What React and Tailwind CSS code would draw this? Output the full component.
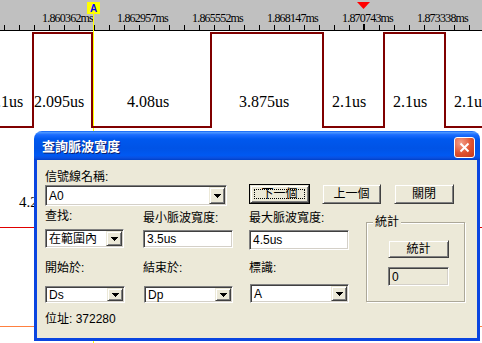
import React from 'react';

// classic win32 3d edges
const SUNKEN = 'border border-[#808080] border-r-white border-b-white shadow-[inset_1px_1px_0_#404040,inset_-1px_-1px_0_#d4d0c8]';
const RAISED = 'border border-[#ece9d8] border-r-[#404040] border-b-[#404040] shadow-[inset_1px_1px_0_#fff,inset_-1px_-1px_0_#808080]';

const ticks = Array.from({ length: 32 }, (_, i) => 4 + i * 15);
const rulerLabels = ['1.860362ms', '1.862957ms', '1.865552ms', '1.868147ms', '1.870743ms', '1.873338ms'];
const pulses = [
    { x: -11, t: '2.1us' },
    { x: 34, t: '2.095us' },
    { x: 127, t: '4.08us' },
    { x: 239, t: '3.875us' },
    { x: 332, t: '2.1us' },
    { x: 393, t: '2.1us' },
    { x: 454, t: '2.1us' },
];

function WaveView() {
    return (
        <svg width="482" height="343" className="block" shapeRendering="crispEdges">
            {/* ruler */}
            <rect x="0" y="0" width="482" height="30" fill="#c0c0c0" />
            <rect x="0" y="30" width="482" height="1" fill="#000" />
            {ticks.map(x => (
                <rect key={x} x={x} y="25" width="1" height="5" fill="#000" />
            ))}
            <rect x="363" y="24" width="2" height="6" fill="#000" />
            {rulerLabels.map((t, i) => (
                <text key={t} x={93 + i * 75} y="22" textAnchor="end" fontFamily="'Liberation Serif', serif" fontSize="12" letterSpacing="-0.8" fill="#000" shapeRendering="auto">
                    {t}
                </text>
            ))}
            {/* cursor A */}
            <rect x="93" y="13" width="1" height="330" fill="#ffff00" />
            <rect x="87" y="2" width="13" height="12" fill="#ffff00" />
            <text x="93.5" y="12" textAnchor="middle" fontFamily="'Liberation Sans', sans-serif" fontSize="10" fontWeight="bold" fill="#0000ff">A</text>
            {/* current position */}
            <polygon points="357,2 370,2 363.5,9" fill="#ff0000" shapeRendering="auto" />

            {/* pulse train */}
            <polyline
                points="0,127 33,127 33,33 92,33 92,127 211,127 211,33 323,33 323,127 384,127 384,33 445,33 445,127 482,127"
                fill="none"
                stroke="#800000"
                strokeWidth="2"
            />
            {pulses.map(p => (
                <text key={p.x} x={p.x} y="107" fontFamily="'Liberation Serif', serif" fontSize="16" fill="#000" shapeRendering="auto">
                    {p.t}
                </text>
            ))}

            {/* next channel */}
            <text x="19" y="207" fontFamily="'Liberation Serif', serif" fontSize="15" fill="#000">4.2</text>
            <rect x="0" y="227" width="482" height="1" fill="#e00000" />
            <rect x="0" y="326" width="482" height="1" fill="#ff8040" />
        </svg>
    );
}

function Arrow() {
    return (
        <svg width="7" height="4" viewBox="0 0 7 4" shapeRendering="crispEdges">
            <path d="M0 0h7v1h-1v1h-1v1h-1v1h-1v-1h-1v-1h-1v-1h-1z" fill="#000" />
        </svg>
    );
}

function Combo({ value, className = '' }) {
    return (
        <div className={`flex bg-white p-[1px] ${SUNKEN} ${className}`}>
            <span className="flex-1 self-center pl-[2px] leading-[14px]">{value}</span>
            <span className={`w-[16px] flex items-center justify-center bg-[#ece9d8] ${RAISED}`}>
                <Arrow />
            </span>
        </div>
    );
}

function TextBox({ value, className = '', bg = 'bg-white' }) {
    return (
        <div className={`flex items-center pl-[3px] leading-[14px] ${SUNKEN} ${bg} ${className}`}>{value}</div>
    );
}

function Btn({ children, className = '', isDefault = false }) {
    if (isDefault) {
        return (
            <div className={`border border-black ${className}`}>
                <div className={`h-full flex items-center justify-center bg-[#ece9d8] outline-1 outline-dotted outline-black outline-offset-[-5px] ${RAISED}`}>
                    {children}
                </div>
            </div>
        );
    }
    return (
        <div className={`flex items-center justify-center bg-[#ece9d8] ${RAISED} ${className}`}>{children}</div>
    );
}

function CloseButton() {
    return (
        <div className="ml-auto mt-[6px] w-[21px] h-[21px] rounded-[3px] border border-white bg-[radial-gradient(circle_at_30%_25%,#f3a08a,#e0522f_55%,#c4391c)] flex items-center justify-center">
            <svg width="11" height="11" viewBox="0 0 11 11">
                <path d="M1.5 1.5l8 8M9.5 1.5l-8 8" stroke="#fff" strokeWidth="2" />
            </svg>
        </div>
    );
}

function PulseDialog() {
    return (
        <div className="absolute left-[34px] top-[131px] w-[446px] h-[210px] flex flex-col text-[12px] leading-[14px] text-black font-['Liberation_Sans','Noto_Sans_CJK_TC',sans-serif]">
            {/* title bar */}
            <div className="h-[29px] shrink-0 flex items-start pl-[8px] pr-[5px] rounded-t-[8px] bg-[linear-gradient(180deg,#0a5df5_0%,#4a95ff_5%,#1b6cff_13%,#0058ee_28%,#0053e6_60%,#0059f2_84%,#0a4fe0_93%,#0040c8_100%)]">
                <span className="mt-[8px] text-[13px] leading-[16px] font-bold text-white [text-shadow:1px_1px_0_#0a1e6e]">查詢脈波寬度</span>
                <CloseButton />
            </div>

            {/* client area */}
            <div className="flex-1 border-x-[3px] border-b-[3px] border-[#0a45e0] bg-[#ece9d8] pl-[8px] pt-[10px] grid grid-cols-[98px_106px_117px_98px] grid-rows-[14px_22px_23px_21px_34px_21px_auto] content-start">
                <div className="col-span-2">信號線名稱:</div>
                <div className="col-span-2" />

                <Combo value="A0" className="col-span-2 w-[182px] h-[21px] mt-[1px]" />
                <div className="col-span-2 flex items-start">
                    <Btn isDefault className="w-[61px] h-[20px]">下一個</Btn>
                    <Btn className="ml-[12px] w-[59px] h-[20px]">上一個</Btn>
                    <Btn className="ml-[13px] w-[60px] h-[20px]">關閉</Btn>
                </div>

                <div className="mt-[3px]">查找:</div>
                <div className="mt-[5px]">最小脈波寬度:</div>
                <div className="mt-[5px]">最大脈波寬度:</div>
                <div className="relative row-span-4 self-start mt-[16px] w-[99px] h-[80px] border border-[#aca899] shadow-[inset_1px_1px_0_#fff,1px_1px_0_#fff] flex flex-col items-start pl-[21px] pt-[17px]">
                    <span className="absolute left-[6px] top-[-8px] px-[2px] bg-[#ece9d8]">統計</span>
                    <Btn className="w-[61px] h-[18px]">統計</Btn>
                    <TextBox value="0" bg="bg-[#ece9d8]" className="mt-[9px] w-[61px] h-[19px]" />
                </div>

                <Combo value="在範圍內" className="w-[79px] h-[19px]" />
                <TextBox value="3.5us" className="mt-[1px] w-[90px] h-[18px]" />
                <TextBox value="4.5us" className="mt-[1px] w-[100px] h-[20px]" />

                <div className="mt-[11px]">開始於:</div>
                <div className="mt-[11px]">結束於:</div>
                <div className="mt-[11px]">標識:</div>

                <Combo value="Ds" className="mt-[2px] w-[80px] h-[17px]" />
                <Combo value="Dp" className="mt-[2px] ml-[1px] w-[89px] h-[17px]" />
                <Combo value="A" className="ml-[1px] w-[99px] h-[19px]" />

                <div className="col-span-3 mt-[7px]">位址: 372280</div>
            </div>
        </div>
    );
}

export default function App() {
    return (
        <div className="relative w-[482px] h-[343px] overflow-hidden bg-white">
            <WaveView />
            <PulseDialog />
        </div>
    );
}
